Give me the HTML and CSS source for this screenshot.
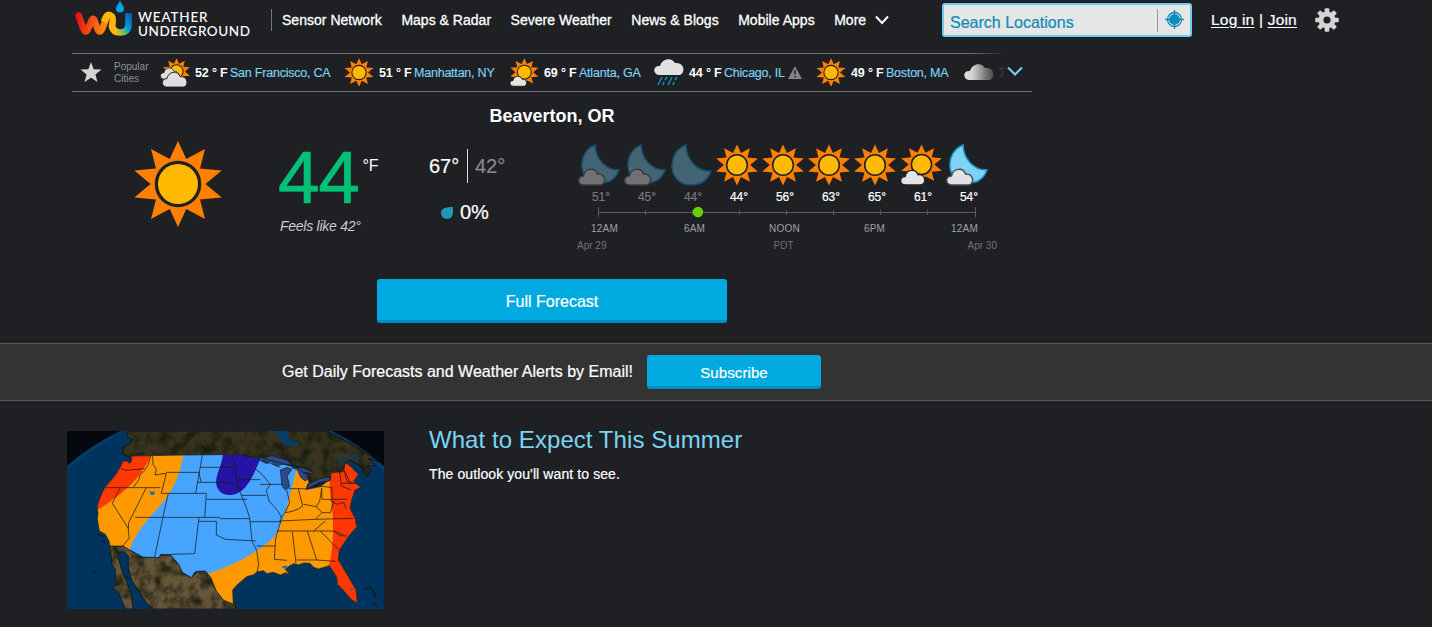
FILE: index.html
```html
<!DOCTYPE html>
<html lang="en">
<head>
<meta charset="utf-8">
<title>Weather Underground</title>
<link rel="stylesheet" href="styles.css">
</head>
<body>
<svg class="defs" width="0" height="0" aria-hidden="true">
  <defs>
    <symbol id="sun" viewBox="-44 -44 88 88">
      <path fill="#ff8000" d="M0-43 8.3-25 27-35 22-15.500 43.700-13.500 27.500 0 43.700 13.500 22 15.500 27 35 8.300 25 0 43-8.300 25-27 35-22 15.500-43.700 13.500-27.500 0-43.700-13.500-22-15.500-27-35-8.300-25Z"/>
      <circle r="23.300" fill="#1e2024"/><circle r="20" fill="#ffb900"/>
    </symbol>
    <symbol id="cloud" viewBox="0 0 28 18">
      <path d="M6 17C-1 17-1 8 5.500 8 7 0 17-1 19.500 6 28 5 29 17 22 17Z"/>
    </symbol>
    <symbol id="moon" viewBox="0 0 42 42">
      <path stroke-width="1.500" d="M16 1C-4 8-3 41 21 41 31 41 38 36 41 27 27 28 16 15 16 1Z"/>
    </symbol>
    <symbol id="sun-cloud" viewBox="0 0 42 42">
      <use href="#sun" x="1" y="0" width="41" height="41"/>
      <use href="#cloud" x="0" y="25" width="26" height="17" fill="#e4e4e4" stroke="#1e2024" stroke-width="1.500"/>
    </symbol>
    <symbol id="moon-cloud" viewBox="0 0 42 42">
      <use href="#moon" x="2" y="0" width="40" height="40"/>
      <use class="night-cloud" href="#cloud" x="0" y="24" width="28" height="18"/>
    </symbol>
    <linearGradient id="w" gradientUnits="userSpaceOnUse" x1="0" x2="32" y1="10" y2="16"><stop offset="0" stop-color="#e8000b"/><stop offset=".4" stop-color="#f23a12"/><stop offset="1" stop-color="#ff8a0a"/></linearGradient>
    <linearGradient id="u" gradientUnits="userSpaceOnUse" x1="38" x2="56" y1="32" y2="15"><stop offset="0" stop-color="#ffb70a"/><stop offset=".25" stop-color="#8cc63f"/><stop offset=".5" stop-color="#00a3e0"/><stop offset="1" stop-color="#1158b5"/></linearGradient>
    <linearGradient id="gray" x2="1"><stop stop-color="#ddd"/><stop offset=".5" stop-color="#ccc"/><stop offset="1" stop-color="#999"/></linearGradient>
  </defs>
</svg>

<header class="topbar">
  <a class="logo">
    <svg width="58" height="38" viewBox="0 0 58 38" fill="none" stroke-width="6.600" stroke-linejoin="round">
      <path stroke="url(#u)" d="M37 26Q38.500 32.500 45 32.500 53.500 32.500 53.500 24V13"/>
      <path stroke="url(#w)" stroke-linecap="round" d="M3.500 15.500 8.500 29Q10.500 34 13 29L16.500 20.500Q18 17 19.500 20.500L22 28Q24.500 35 27.500 28L31 19"/>
      <path stroke="#ffb70a" d="M29 22 30.500 18Q33 12.500 37 16.500 38.500 19 37 26 38 31 42 32"/>
      <path fill="#00a3e0" d="M45 0C46 4 49 5.500 49 8.700A4 3.800 0 0 1 41 8.700C41 5.500 44 4 45 0Z"/>
    </svg>
    <span class="wordmark"><span class="word-a">WEATHER</span><span class="word-b">UNDERGROUND</span></span>
  </a>
  <nav class="nav">
    <a>Sensor Network</a><a>Maps &amp; Radar</a><a>Severe Weather</a><a>News &amp; Blogs</a><a>Mobile Apps</a>
    <a class="more">More <svg width="14" height="10" viewBox="0 0 14 10" fill="none" stroke="#fff" stroke-width="2"><path d="M1 1.500 7 8 13 1.500"/></svg></a>
  </nav>
  <div class="search">
    <span class="query">Search Locations</span>
    <span class="locate"><svg width="19" height="19" viewBox="0 0 19 19" fill="none" stroke="#0b8dba" stroke-width="1.300"><circle cx="9.500" cy="9.500" r="7"/><circle cx="9.500" cy="9.500" r="4.800" fill="#0b8dba"/><path d="M9.500 0V6M9.500 13V19M0 9.500H6M13 9.500H19"/></svg></span>
  </div>
  <div class="account"><a>Log in</a> | <a>Join</a></div>
  <svg class="gear" width="24" height="24" viewBox="-12 -12 24 24">
    <g fill="#d4d4d4"><g id="teeth"><rect x="-2.300" y="-11.800" width="4.600" height="23.600" rx="1"/><rect x="-11.800" y="-2.300" width="23.600" height="4.600" rx="1"/></g><use href="#teeth" transform="rotate(45)"/><circle r="8.500"/></g><circle r="3.600" fill="#1e2024"/>
  </svg>
</header>

<section class="cities">
  <svg class="star" width="22" height="21" viewBox="0 0 22 21"><path fill="#d4d4d4" d="M11 0 13.700 7.300 21.500 7.600 15.400 12.500 17.500 20 11 15.700 4.500 20 6.600 12.500.5 7.600 8.300 7.300Z"/></svg>
  <span class="popular">Popular<br>Cities</span>
  <div class="city c1"><svg width="30" height="30" viewBox="0 0 30 30"><use href="#sun" x="3" y="0" width="27" height="27"/><g fill="#dedede" stroke="#1e2024"><use href="#cloud" x="0" y="9" width="20" height="13"/><use href="#cloud" x="1" y="13" width="28" height="17"/></g></svg><b>52 ° F</b><a>San Francisco, CA</a></div>
  <div class="city c2"><svg width="30" height="30"><use href="#sun" width="30" height="29"/></svg><b>51 ° F</b><a>Manhattan, NY</a></div>
  <div class="city c3"><svg width="30" height="30"><use href="#sun-cloud" width="30" height="29"/></svg><b>69 ° F</b><a>Atlanta, GA</a></div>
  <div class="city c4"><svg width="30" height="30" viewBox="0 0 30 30"><path fill="#e2e2e2" d="M5 17C-2 16-1 7 6 8 8 0 18-1 21 5 32 4 31 17 25 17Z"/><path stroke="#0c95c9" stroke-width="1.400" d="M8 19 4 27M13 19 11 22M10 24 9 27M18 19 14 27M23 19 21 22M20 24 19 27"/></svg><b>44 ° F</b><a>Chicago, IL</a><svg class="alert" width="14" height="13" viewBox="0 0 14 13"><path fill="#858585" d="M7 0 14 13H0Z"/><path stroke="#1e2024" stroke-width="1.500" d="M7 4V8.500M7 10V11.500"/></svg></div>
  <div class="city c5"><svg width="30" height="30"><use href="#sun" width="30" height="29"/></svg><b>49 ° F</b><a>Boston, MA</a></div>
  <div class="city c6"><svg width="30" height="30" viewBox="0 0 30 30"><path fill="url(#gray)" d="M5 22C-2 21-1 12 6 13 8 5 18 4 21 10 32 9 31 22 25 22Z"/></svg><b>7</b></div>
  <div class="fade"></div>
  <svg class="expand" width="16" height="10" viewBox="0 0 16 10" fill="none" stroke="#7ad4f3" stroke-width="2"><path d="M1 1.500 8 8.500 15 1.500"/></svg>
</section>

<main class="weather">
  <h1 class="place">Beaverton, OR</h1>
  <div class="current">
    <svg class="big-sun" width="88" height="88"><use href="#sun" width="88" height="88"/></svg>
    <div class="now">
      <div class="temp">44<span class="unit">°F</span></div>
      <div class="feels">Feels like 42°</div>
    </div>
    <div class="range">
      <div class="highlow"><span class="high">67°</span><span class="low">42°</span></div>
      <div class="rain"><svg width="12" height="12" viewBox="0 0 12 12"><path fill="#2196b5" d="M12 0V6A6 6 0 0 1 6 12 6 6 0 0 1 0 6C0 2 3 0 12 0Z"/></svg>0%</div>
    </div>
    <div class="timeline">
      <div class="hours">
        <div class="hour night dim"><svg><use href="#moon-cloud"/></svg>51°</div>
        <div class="hour night dim"><svg><use href="#moon-cloud"/></svg>45°</div>
        <div class="hour night dim"><svg><use href="#moon"/></svg>44°</div>
        <div class="hour"><svg><use href="#sun"/></svg>44°</div>
        <div class="hour"><svg><use href="#sun"/></svg>56°</div>
        <div class="hour"><svg><use href="#sun"/></svg>63°</div>
        <div class="hour"><svg><use href="#sun"/></svg>65°</div>
        <div class="hour"><svg><use href="#sun-cloud"/></svg>61°</div>
        <div class="hour bright"><svg><use href="#moon-cloud"/></svg>54°</div>
      </div>
      <svg class="axis" width="378" height="12" viewBox="0 0 378 12"><path stroke="#5c5c5e" fill="none" d="M.5 1V11M377.500 1V11M.5 6.500H377.500M47.500 4V9M94.500 4V9M141.500 4V9M188.500 4V9M235.500 4V9M282.500 4V9M329.500 4V9"/><circle cx="100" cy="6" r="5.200" fill="#66d000"/></svg>
      <div class="times"><span>12AM</span><span>6AM</span><span>NOON</span><span>6PM</span><span>12AM</span></div>
      <div class="dates"><span>Apr 29</span><span class="zone">PDT</span><span>Apr 30</span></div>
    </div>
  </div>
  <a class="button forecast">Full Forecast</a>
</main>

<section class="signup">
  <span class="pitch">Get Daily Forecasts and Weather Alerts by Email!</span>
  <a class="button subscribe">Subscribe</a>
</section>

<article class="story">
  <svg class="map" width="317" height="178" viewBox="0 0 951 534" preserveAspectRatio="none">
    <defs>
      <clipPath id="usa"><path id="outline" d="M194 75 193 92 187 97 181 90 168 91 160 108 145 133 113 170 98 202 90 230 93 245 91 265 97 300 115 310 126 330 129 345 168 345 185 355 227 378 277 380 280 371 312 373 335 400 347 425 374 440 383 424 390 421 415 420 432 440 448 480 470 508 499 519 497 477 510 462 539 437 560 431 570 423 589 419 600 428 619 424 640 432 656 425 669 432 655 415 664 407 680 398 694 402 710 396 729 397 740 409 754 414 787 404 809 437 811 460 824 472 854 507 871 515 867 477 844 437 814 387 817 357 844 317 869 287 864 262 849 232 854 207 864 177 881 169 859 152 874 130 850 105 834 95 829 122 794 125 787 147 759 167 721 175 726 155 719 132 694 112 659 102 589 82 534 77 524 70 349 72Z"/></clipPath>
      <filter id="terrain" x="0" y="0" width="1" height="1" color-interpolation-filters="sRGB"><feTurbulence type="fractalNoise" baseFrequency=".03" numOctaves="4" seed="3"/><feColorMatrix values="0 0 0 0 .08 0 0 0 0 .1 0 0 0 0 .05 2 0 0 0 -.75"/><feComposite in2="SourceGraphic" operator="in" result="n"/><feMerge><feMergeNode in="SourceGraphic"/><feMergeNode in="n"/></feMerge></filter>
    </defs>
    <rect width="951" height="534" fill="#05080f"/>
    <path fill="#073e68" d="M0 104Q75 40 160 0H794Q880 40 951 106V534H0Z"/>
    <path fill="#00345e" d="M0 116Q80 45 172 0H780Q870 45 951 120V534H0Z"/>
    <path filter="url(#terrain)" fill="#3a341f" stroke="#080b0a" stroke-width="2" d="M185 0 178 15 196 25 188 40 165 50 170 70 190 80 195 100 200 75 524 72 590 84 720 112 722 175 780 150 830 125 835 95 850 88 880 105 900 137 913 115 896 105 925 104 903 82 935 92 870 48 780 0Z"/>
    <path fill="#073e68" d="M595 0 630 8 652 43 697 46 692 35 668 25 660 0ZM818 104Q810 80 832 76L870 70 880 92 850 75 830 85Z"/>
    <path filter="url(#terrain)" fill="#655539" stroke="#080b0a" stroke-width="2" d="M129 345 168 345 185 355 227 378 277 380 280 371 312 373 335 400 347 425 374 440 390 421 415 420 432 440 448 480 470 508 506 516 506 534H254L230 503 215 480 195 450 184 410 184 375 170 362 158 364 152 373 165 420 180 455 193 492 198 534H175L155 485 135 468 155 460 144 445 145 415 135 400Z"/>
    <g clip-path="url(#usa)">
      <path fill="#47a5ff" d="M80 60H900V530H80Z"/>
      <path fill="#f90" d="M80 60H352Q335 150 305 188C280 235 200 290 185 370H80ZM415 431C510 402 595 350 625 312 660 250 670 180 693 100H900V534H415Z"/>
      <path fill="#ff3700" d="M80 60H256C225 145 170 185 85 242ZM788 80V170L797 250Q802 350 784 410L790 534H900V80Z"/>
      <path fill="#2413a4" d="M469 60C465 110 444 130 448 160 454 200 510 205 540 162 565 130 570 100 592 60Z"/>
    </g>
    <g fill="#2c4a87" stroke="#10152d" stroke-width="2">
      <path d="M578 88 613 73 662 88 674 102 648 99 629 105 610 91 600 98Z"/><path d="M640 117 661 109 674 115 661 135 668 167 655 177 645 165Z"/><path d="M674 110 708 110 738 125 731 128 709 123 722 144 714 150 701 139 690 115Z"/><path d="M716 176 722 160 760 143 792 137 789 149 758 154Z"/>
    </g>
    <g fill="none" stroke="#161a1a" stroke-width="2.200" stroke-linejoin="round">
      <use href="#outline"/>
      <path d="M162 113 177 118 232 113M251 75 244 100 232 120 220 130 215 147 199 169M113 170H280M257 75 258 100 268 115 264 132 298 127 283 187M160 170 136 217 184 292M238 170 185 275 184 300 187 320 168 345M205 259H433M283 187H304M298 124H396L402 153M406 72 386 187M400 109H447M391 154H467M304 187H418L413 259M304 187 288 258 263 378M396 259 383 368 280 371M394 271H448V312L475 325 568 330M418 205H540"/>
      <path d="M496 72 507 112 508 145 517 178M447 109H507M467 154 490 156 517 168M507 146H580M517 178 528 205 540 235 548 260 555 330 569 358 575 400 570 423M522 193H598M433 259H459M548 272H642M459 263H548M563 112 585 130 610 160 598 178 606 210 632 239 644 260 637 285 626 322 622 385 660 388M587 88 640 109M580 160H647M659 177 668 215 654 245 640 262M665 173H715M694 173 707 225 694 234 672 242 654 245M764 175 758 210 748 227 710 220M748 227 765 245 745 265 637 270M745 265 859 262M765 245 790 245 800 211M764 170 765 205H840M630 300H802L830 312M775 270 740 300M802 300 817 314 840 315M676 302 687 398M721 300 749 387M760 300 814 355M689 387H750L806 391M569 345H625M790 208 810 220 830 214 838 234M759 165 795 170V205M818 122 823 165 852 177M833 122 840 152 862 158M834 97 830 115 850 155M823 157H862"/>
    </g>
    <path fill="#236ca8" d="M246 178 255 183 264 180 261 192H252ZM642 408 660 402 658 415ZM852 468 860 475 852 480Z"/>
    <g fill="none" stroke="#111c1c" stroke-width="4"><path d="M91 310 110 316M107 326 115 336M80 419 85 424M890 475 910 468 925 490 921 502M917 512 930 528M175 435 187 443"/></g>
  </svg>
  <div class="copy"><h2 class="headline">What to Expect This Summer</h2><p class="deck">The outlook you'll want to see.</p></div>
</article>
</body>
</html>
```
FILE: styles.css
```css
* { box-sizing: border-box; }
body { margin: 0; height: 627px; overflow: hidden; background: #1e2024; color: #fff; font-family: "Liberation Sans", Arial, sans-serif; }
svg { display: block; flex: none; }
.defs { position: absolute; }

.topbar { display: flex; align-items: flex-start; height: 53px; padding-left: 75px; white-space: nowrap; }
.logo { display: flex; width: 196px; gap: 5px; }
.wordmark { display: flex; flex-direction: column; padding-top: 10px; font: 500 13.5px/14px Lato, sans-serif; }
.word-a { letter-spacing: .8px; }
.word-b { letter-spacing: .55px; }
.nav { display: flex; gap: 19.500px; width: 671px; height: 22px; margin-top: 9px; padding-left: 10px; border-left: 1px solid #777; font-size: 14px; line-height: 22px; letter-spacing: .02px; -webkit-text-stroke: .3px #fff; }
.more { display: flex; align-items: center; gap: 9px; }
.search { display: flex; align-items: center; width: 250px; height: 34px; margin-top: 3px; border: 2px solid #6bcdf0; border-radius: 3px; background: #e6e6e6; color: #0b8dba; }
.query { width: 213px; padding: 5px 0 0 6px; font-size: 16px; -webkit-text-stroke: .2px #0b8dba; }
.locate { height: 23px; padding: 1px 0 0 7px; border-left: 1px solid #999; }
.account { width: 104px; padding: 10px 0 0 19px; font-size: 15.500px; line-height: 20px; letter-spacing: .2px; -webkit-text-stroke: .2px #fff; }
.account a { text-decoration: underline; text-underline-offset: 2px; }
.gear { margin: 8px 0 0 19px; }

.cities { position: relative; display: flex; align-items: center; width: 960px; height: 39px; margin-left: 72px; padding-left: 8px; border-top: 1px solid #6e6e70; border-bottom: 1px solid #6e6e70; font-size: 12.500px; white-space: nowrap; }
.popular { flex: none; width: 46px; margin-left: 12px; color: #909090; font-size: 10px; line-height: 12px; }
.city { display: flex; align-items: center; flex: none; }
.city b { flex: none; width: 35px; padding-left: 5px; margin-right: 5px; font-size: 12.500px; letter-spacing: -.15px; }
.city a { color: #7ad4f3; letter-spacing: -.22px; -webkit-text-stroke: .15px; }
.c1 { width: 184px; }
.c2 { width: 165px; }
.c3 { width: 145px; }
.c4 { width: 162px; }
.c5 { width: 148px; }
.city .alert { margin-left: 3px; }
.fade { position: absolute; right: 0; top: -1px; width: 60px; height: 37px; background: linear-gradient(90deg, transparent, #1e2024 56%); }
.expand { position: absolute; right: 9px; top: 12px; }

.weather { display: flex; flex-direction: column; align-items: center; width: 960px; margin-left: 72px; padding-top: 12px; }
.place { margin: 0; font-size: 18px; line-height: 24px; }
.current { display: flex; width: 960px; height: 151px; }
.big-sun { margin: 12px 56px 0 62px; }
.now { width: 151px; }
.temp { display: flex; height: 88px; color: #00c176; font-size: 75px; line-height: 99px; letter-spacing: -1.500px; -webkit-text-stroke: .6px #00c176; }
.unit { margin-left: 4px; padding-top: 29px; color: #fff; font-size: 16px; line-height: 17px; letter-spacing: 0; -webkit-text-stroke: 0; }
.feels { padding-left: 2px; color: #ccc; font-size: 14px; line-height: 20px; font-style: italic; letter-spacing: -.25px; }
.range { width: 149px; padding-top: 21px; font-size: 20px; -webkit-text-stroke: .2px; }
.highlow { display: flex; line-height: 34px; }
.high { width: 39px; border-right: 1px solid #ddd; }
.low { padding-left: 7px; color: #88888a; }
.rain { display: flex; align-items: center; gap: 7px; padding: 18px 0 0 12px; }
.timeline { width: 430px; margin-left: -1px; padding-top: 16px; }
.hours { display: flex; margin-left: 1px; }
.hour { flex: none; width: 46px; font-size: 12px; line-height: 20px; text-align: center; -webkit-text-stroke: .2px; }
.hour svg { width: 42px; height: 42px; margin-bottom: 1px; }
.night svg { fill: #436472; stroke: #14506b; --cloud: #707174; --edge: #3b3c40; }
.bright svg { fill: #7dd3f2; stroke: #1a8cbf; --cloud: #e2e2e2; --edge: #4a4c50; }
.night-cloud { fill: var(--cloud); stroke: var(--edge); stroke-width: 1.500px; }
.dim { color: #77787b; }
.axis { margin: -1px 0 0 21px; }
.times { display: flex; width: 450px; margin-top: 4px; color: #a0a0a0; font-size: 10px; line-height: 14px; letter-spacing: .2px; }
.times span { width: 90px; padding-right: 35px; text-align: center; }
.dates { display: flex; justify-content: space-between; width: 420px; margin-top: 4px; color: #707174; font-size: 10px; line-height: 12px; }
.zone { padding-right: 7px; }
.button { display: block; border-bottom: 3px solid #008dc5; border-radius: 3px; background: #00a9df; text-align: center; -webkit-text-stroke: .2px; }
.forecast { width: 350px; height: 44px; font-size: 16px; line-height: 45px; }

.signup { display: flex; height: 58px; margin-top: 20px; padding: 11px 0 0 282px; border-top: 1px solid #59595a; border-bottom: 1px solid #59595a; background: #333; }
.pitch { width: 365px; font-size: 16px; line-height: 33px; white-space: nowrap; -webkit-text-stroke: .2px; }
.subscribe { width: 174px; height: 34px; font-size: 15px; line-height: 35px; letter-spacing: .1px; }

.story { display: flex; gap: 45px; padding: 30px 0 0 67px; }
.headline { margin: -5px 0 0; color: #7ad4f3; font-size: 24px; line-height: 28px; font-weight: 400; letter-spacing: .06px; }
.deck { margin: 11px 0 0; font-size: 14px; line-height: 18px; letter-spacing: .1px; -webkit-text-stroke: .2px #fff; }
```
